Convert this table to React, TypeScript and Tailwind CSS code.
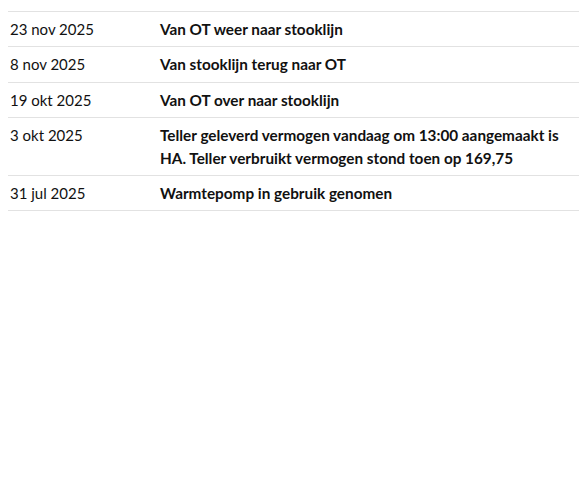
import React from 'react';

const rows = [
  { date: '23 nov 2025', text: 'Van OT weer naar stooklijn' },
  { date: '8 nov 2025', text: 'Van stooklijn terug naar OT' },
  { date: '19 okt 2025', text: 'Van OT over naar stooklijn' },
  {
    date: '3 okt 2025',
    text: 'Teller geleverd vermogen vandaag om 13:00 aangemaakt is HA. Teller verbruikt vermogen stond toen op 169,75',
  },
  { date: '31 jul 2025', text: 'Warmtepomp in gebruik genomen' },
];

export default function App() {
  return (
    <div className="min-h-screen bg-white pt-[11px] pl-2 text-[#111] font-['Lato','Liberation_Sans',sans-serif] text-[15px]">
      <table className="w-full border-collapse">
        <tbody>
          {rows.map((r) => (
            <tr key={r.date} className="border-y border-[#e2e2e2] align-top">
              <td className="w-[150px] px-[2px] py-[5.9px] leading-[22.6px]">{r.date}</td>
              <td className="px-[2px] py-[5.9px] leading-[22.6px] text-[15.3px] font-bold">{r.text}</td>
            </tr>
          ))}
        </tbody>
      </table>
    </div>
  );
}
